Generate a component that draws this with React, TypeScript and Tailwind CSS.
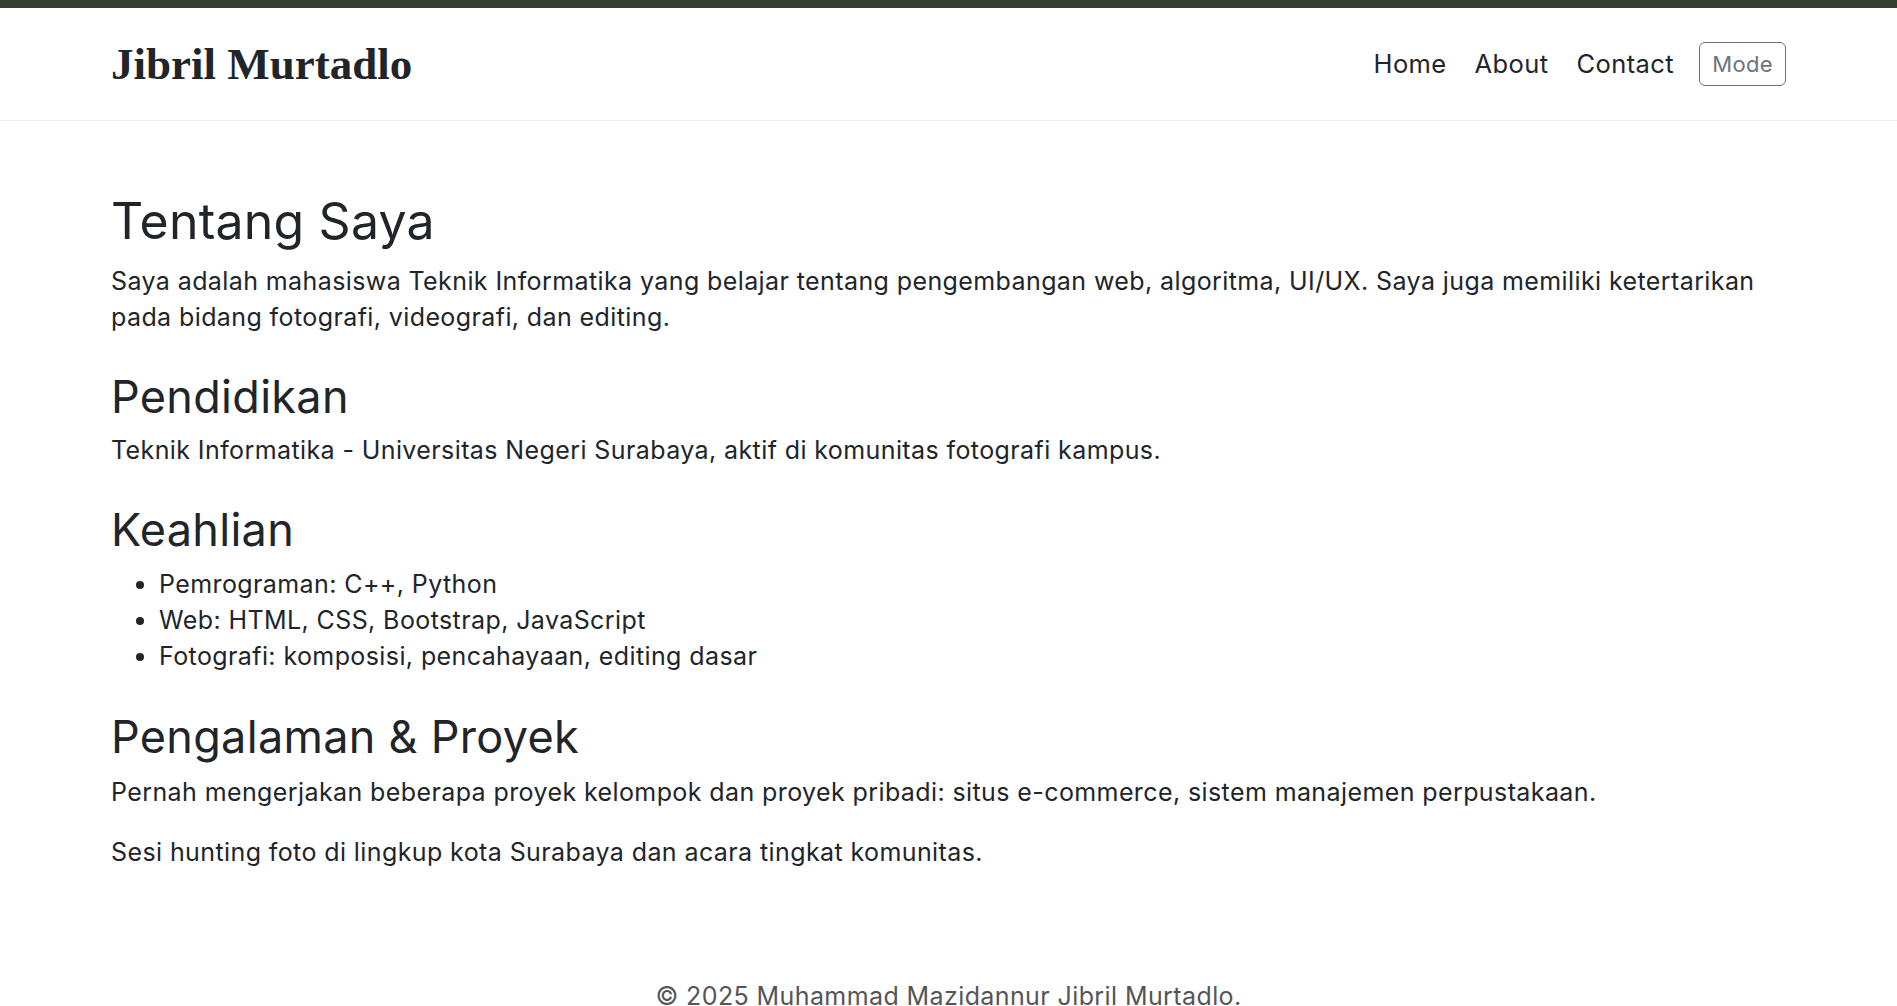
import React from "react";

const body = { fontFamily: "Inter, 'Noto Sans', sans-serif" } as const;

export default function App() {
  return (
    <div className="min-h-screen bg-white text-[#212529]" style={body}>
      <div className="h-2 bg-[#353f2f]" />
      <header className="border-b border-[#eeeeee]">
        <div className="mx-[111px] flex h-[112px] items-center justify-between">
          <a
            className="text-[45px] font-bold leading-none text-[#212529]"
            style={{ fontFamily: "'Liberation Serif', 'DejaVu Serif', serif" }}
          >
            Jibril Murtadlo
          </a>
          <nav className="flex items-center">
            <div className="flex items-center gap-[28px] text-[25.5px] leading-9 tracking-[0.4px] text-[#212529]">
              <a>Home</a>
              <a>About</a>
              <a>Contact</a>
            </div>
            <button className="ml-[25px] h-[44px] w-[87px] rounded-[6px] border border-[#6c757d] text-[22px] tracking-[0.3px] text-[#6c757d]">
              Mode
            </button>
          </nav>
        </div>
      </header>
      <main className="mx-[111px] pt-[70px] text-[25px] leading-9 tracking-[0.4px]">
        <h1 className="mb-[12px] text-[50px] font-normal leading-[60px] tracking-[0.2px]">Tentang Saya</h1>
        <p className="mb-6">
          Saya adalah mahasiswa Teknik Informatika yang belajar tentang pengembangan web, algoritma, UI/UX. Saya juga memiliki ketertarikan pada bidang fotografi, videografi, dan editing.
        </p>
        <h2 className="mt-[35px] mb-[8px] text-[45px] font-normal leading-[54px] tracking-[0.3px]">Pendidikan</h2>
        <p className="mb-6">
          Teknik Informatika - Universitas Negeri Surabaya, aktif di komunitas fotografi kampus.
        </p>
        <h2 className="mt-[35px] mb-[9px] text-[45px] font-normal leading-[54px] tracking-[0.3px]">Keahlian</h2>
        <ul className="mb-6 list-disc pl-[48px]">
          <li>Pemrograman: C++, Python</li>
          <li>Web: HTML, CSS, Bootstrap, JavaScript</li>
          <li>Fotografi: komposisi, pencahayaan, editing dasar</li>
        </ul>
        <h2 className="mt-[36px] mb-[10px] text-[45px] font-normal leading-[54px] tracking-[0.3px]">Pengalaman &amp; Proyek</h2>
        <p className="mb-6">
          Pernah mengerjakan beberapa proyek kelompok dan proyek pribadi: situs e-commerce, sistem manajemen perpustakaan.
        </p>
        <p className="mb-6">Sesi hunting foto di lingkup kota Surabaya dan acara tingkat komunitas.</p>
      </main>
      <footer className="pt-[84px] pb-6 text-center text-[25px] leading-9 tracking-[0.4px] text-[#555]">
        © 2025 Muhammad Mazidannur Jibril Murtadlo.
      </footer>
    </div>
  );
}
